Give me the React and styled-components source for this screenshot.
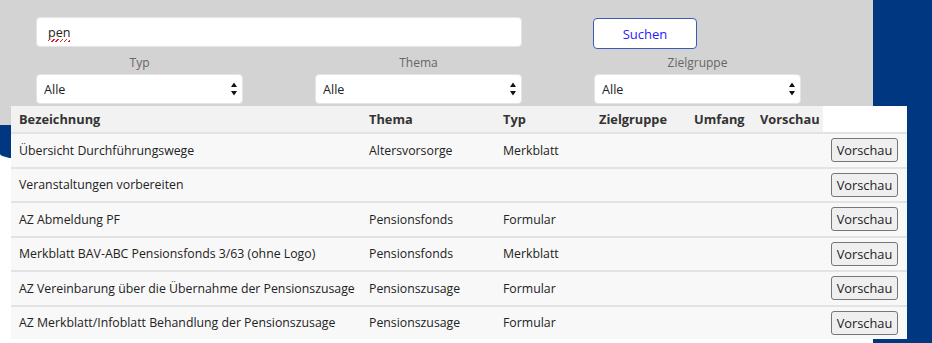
import styled, { createGlobalStyle } from "styled-components";

const GlobalStyle = createGlobalStyle`
  html, body {
    margin: 0;
    padding: 0;
  }
  body {
    font-family: "Open Sans", "Noto Sans", sans-serif;
    font-size: 12.3px;
    color: #212529;
    background: #fff;
  }
`;

const Page = styled.div`
  min-height: 343px;
  background: linear-gradient(to right, transparent 873px, #003781 873px);
`;

const Hero = styled.div`
  height: 160px;
  background: #003781;
  border-bottom-left-radius: 40px 6px;
`;

const SearchPanel = styled.div`
  width: 873px;
  height: 125px;
  box-sizing: border-box;
  padding: 17px 0 0 36px;
  background: #d3d3d3;
`;

const SearchRow = styled.div`
  display: flex;
  align-items: flex-start;
  gap: 71px;
`;

const InputWrap = styled.div`
  position: relative;
  width: 486px;
  height: 30px;
`;

const SearchInput = styled.input`
  width: 100%;
  height: 30px;
  box-sizing: border-box;
  padding: 0 11px;
  border: 1px solid #e4e4e4;
  border-radius: 4px;
  background: #fff;
  font: inherit;
  font-size: 12.6px;
  color: #222;
  outline: none;
`;

const SpellMark = styled.span`
  position: absolute;
  left: 12px;
  top: 22px;
  width: 22px;
  height: 3px;
  background: repeating-linear-gradient(
    135deg,
    transparent 0 1px,
    #e02020 1px 2px,
    transparent 2px 3px
  );
  pointer-events: none;
`;

const SearchButton = styled.button`
  width: 104px;
  height: 31px;
  margin-top: 1px;
  border: 1px solid #3b5bb5;
  border-radius: 4px;
  background: #fff;
  color: #2a1bff;
  font: inherit;
  font-size: 13px;
`;

const FilterGrid = styled.div`
  display: grid;
  grid-template-columns: repeat(3, 207px);
  column-gap: 72px;
  margin-top: 6px;
`;

const Filter = styled.div`
  display: flex;
  flex-direction: column;
  align-items: stretch;
  gap: 3px;
`;

const FilterLabel = styled.label`
  text-align: center;
  font-size: 12px;
  line-height: 16px;
  color: #666;
`;

const SelectWrap = styled.div`
  position: relative;
  height: 30px;
`;

const Select = styled.select`
  width: 100%;
  height: 30px;
  box-sizing: border-box;
  appearance: none;
  padding: 0 24px 0 7px;
  border: 1px solid #e4e4e4;
  border-radius: 4px;
  background: #fff;
  font: inherit;
  font-size: 12.6px;
  color: #222;
  outline: none;
`;

const Arrows = styled.svg`
  position: absolute;
  right: 6px;
  top: 8px;
  pointer-events: none;
`;

const Table = styled.div`
  position: relative;
  width: 896px;
  margin: -54px 0 0 11px;
  background: #f8f8f8;
`;

const cols = "350px 134px 96px 95px 66px 71px 84px";

const HeadRow = styled.div`
  display: grid;
  grid-template-columns: ${cols};
  height: 26px;
`;

const HeadCell = styled.div`
  display: flex;
  align-items: center;
  padding-left: 8px;
  font-size: 12.8px;
  font-weight: 700;
  color: #333;
  background: ${(p) => (p.$blank ? "#fff" : "#f2f2f2")};
`;

const Row = styled.div`
  display: grid;
  grid-template-columns: ${cols};
  height: 34.5px;
  box-sizing: border-box;
  border-top: 2px solid #e3e3e3;
`;

const Cell = styled.div`
  display: flex;
  align-items: center;
  padding-left: 8px;
  white-space: nowrap;
  color: #222;
`;

const PreviewButton = styled.button`
  height: 24px;
  width: 67px;
  padding: 0;
  border: 1px solid #767676;
  border-radius: 3px;
  background: #efefef;
  font: inherit;
  font-size: 12.8px;
  color: #222;
`;

const filters = ["Typ", "Thema", "Zielgruppe"];
const headers = ["Bezeichnung", "Thema", "Typ", "Zielgruppe", "Umfang", "Vorschau"];
const rows = [
  ["Übersicht Durchführungswege", "Altersvorsorge", "Merkblatt"],
  ["Veranstaltungen vorbereiten", "", ""],
  ["AZ Abmeldung PF", "Pensionsfonds", "Formular"],
  ["Merkblatt BAV-ABC Pensionsfonds 3/63 (ohne Logo)", "Pensionsfonds", "Merkblatt"],
  ["AZ Vereinbarung über die Übernahme der Pensionszusage", "Pensionszusage", "Formular"],
  ["AZ Merkblatt/Infoblatt Behandlung der Pensionszusage", "Pensionszusage", "Formular"],
];

export default function App() {
  return (
    <Page>
      <GlobalStyle />
      <Hero>
        <SearchPanel>
          <SearchRow>
            <InputWrap>
              <SearchInput defaultValue="pen" spellCheck={false} />
              <SpellMark />
            </InputWrap>
            <SearchButton>Suchen</SearchButton>
          </SearchRow>
          <FilterGrid>
            {filters.map((f) => (
              <Filter key={f}>
                <FilterLabel>{f}</FilterLabel>
                <SelectWrap>
                  <Select defaultValue="Alle">
                    <option>Alle</option>
                  </Select>
                  <Arrows width="6" height="14" viewBox="0 0 6 14">
                    <path d="M3 0.5 L6 5 L0 5 Z" fill="#111" />
                    <path d="M0 9 L6 9 L3 13.5 Z" fill="#111" />
                  </Arrows>
                </SelectWrap>
              </Filter>
            ))}
          </FilterGrid>
        </SearchPanel>
      </Hero>
      <Table>
        <HeadRow>
          {headers.map((h) => (
            <HeadCell key={h}>{h}</HeadCell>
          ))}
          <HeadCell $blank />
        </HeadRow>
        {rows.map((r) => (
          <Row key={r[0]}>
            <Cell>{r[0]}</Cell>
            <Cell>{r[1]}</Cell>
            <Cell>{r[2]}</Cell>
            <Cell />
            <Cell />
            <Cell />
            <Cell>
              <PreviewButton>Vorschau</PreviewButton>
            </Cell>
          </Row>
        ))}
      </Table>
    </Page>
  );
}
